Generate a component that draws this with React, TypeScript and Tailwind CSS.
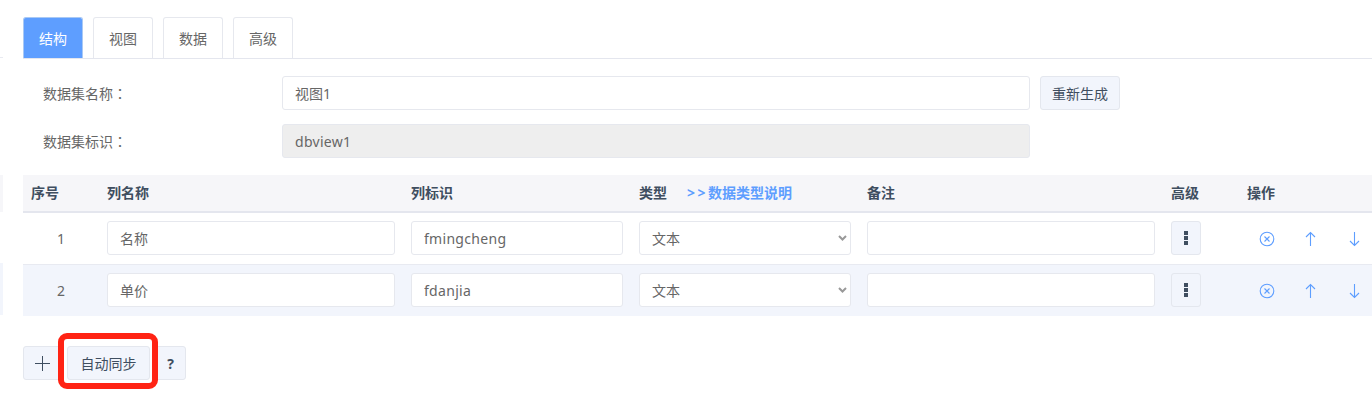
import React from "react";

const F = "font-['Noto_Sans','Noto_Sans_CJK_SC',sans-serif]";
const inputBase = "h-[34px] rounded-[3px] border border-[#e6e8ee] px-3 text-[14px] text-[#666] outline-none";
const inputCls = inputBase + " w-full bg-white";

function Tab({ label, active }: { label: string; active?: boolean }) {
  return (
    <div
      className={
        "flex h-[41px] w-[60px] items-center justify-center rounded-t-[3px] border border-b-0 text-[14px] " +
        (active
          ? "border-[#a9c9f5] bg-[#5e9eff] text-white"
          : "border-[#e6e8ee] bg-white text-[#666]")
      }
    >
      {label}
    </div>
  );
}

function Btn({ children, className }: { children: React.ReactNode; className?: string }) {
  return (
    <button
      className={
        "flex h-[34px] items-center justify-center rounded-[3px] border border-[#e4e7ee] bg-[#f2f5fc] text-[14px] text-[#3f4e60] " +
        (className ?? "")
      }
    >
      {children}
    </button>
  );
}

function OpIcons() {
  return (
    <div className="flex h-[34px] items-center pt-px text-[#5e9eff]">
      <svg width="16" height="16" viewBox="0 0 16 16" fill="none" stroke="currentColor" strokeWidth="1.1" className="ml-[20px]">
        <circle cx="8" cy="8" r="6.8" />
        <path d="M5.5 5.5l5 5M10.5 5.5l-5 5" />
      </svg>
      <svg width="13" height="16" viewBox="0 0 13 16" fill="none" stroke="currentColor" strokeWidth="1.1" className="ml-[29px]">
        <path d="M6.5 15V1.5M2 6L6.5 1.5 11 6" />
      </svg>
      <svg width="13" height="16" viewBox="0 0 13 16" fill="none" stroke="currentColor" strokeWidth="1.1" className="ml-[31px]">
        <path d="M6.5 1v13.5M2 10l4.5 4.5L11 10" />
      </svg>
    </div>
  );
}

const gridCols = "grid grid-cols-[76px_304px_228px_228px_304px_76px_133px]";

function Row({ n, name, id, alt }: { n: number; name: string; id: string; alt?: boolean }) {
  return (
    <div className={gridCols + " items-start pt-2 " + (alt ? "h-[51px] bg-[#f2f5fc]" : "h-[52px] border-b border-[#e8eaf1] bg-white")}>
      <div className="pt-px text-center text-[14px] leading-[34px] text-[#666]">{n}</div>
      <div className="px-2">
        <input readOnly value={name} className={inputCls} />
      </div>
      <div className="px-2">
        <input readOnly value={id} className={inputCls + " tracking-[0.3px]"} />
      </div>
      <div className="px-2">
        <div className={inputCls + " flex items-center justify-between"}>
          <span>文本</span>
          <svg width="9" height="6" viewBox="0 0 9 6" className="mr-[-9px]" fill="none" stroke="#999" strokeWidth="2">
            <path d="M1 1l3.5 3.5L8 1" />
          </svg>
        </div>
      </div>
      <div className="px-2">
        <input readOnly className={inputCls} />
      </div>
      <div className="px-2">
        <button className="flex h-[34px] w-[30px] flex-col items-center justify-center gap-[1px] rounded-[3px] border border-[#e4e7ee] bg-[#f2f5fc]">
          <span className="h-[4px] w-[4px] bg-[#3f4e60]" />
          <span className="h-[4px] w-[4px] bg-[#3f4e60]" />
          <span className="h-[4px] w-[4px] bg-[#3f4e60]" />
        </button>
      </div>
      <OpIcons />
    </div>
  );
}

function Label({ text }: { text: string }) {
  return (
    <div className="ml-[20px] w-[239px] text-[14px] text-[#666]">
      {text}
      <span className="font-['Noto_Sans_CJK_TC',sans-serif]">：</span>
    </div>
  );
}

export default function App() {
  return (
    <div className={F + " flex h-[410px] w-[1372px] overflow-hidden bg-white"}>
      <div className="w-[3px] shrink-0">
        <div className="mt-[57px] h-px bg-[#e8eaf1]" />
        <div className="mt-[117px] h-[37px] bg-[#f6f6f9]" />
        <div className="mt-[51px] h-[52px] bg-[#f2f5fc]" />
      </div>
      <div className="ml-[20px] flex-1">
        <div className="flex gap-[10px] border-b border-[#e4e6ee] pt-[17px]">
          <Tab label="结构" active />
          <Tab label="视图" />
          <Tab label="数据" />
          <Tab label="高级" />
        </div>

        <div className="mt-[17px] flex items-center">
          <Label text="数据集名称" />
          <input readOnly value="视图1" className={inputBase + " w-[748px] bg-white"} />
          <Btn className="ml-[10px] w-[80px]">重新生成</Btn>
        </div>
        <div className="mt-[14px] flex items-center">
          <Label text="数据集标识" />
          <input readOnly value="dbview1" className={inputBase + " w-[748px] bg-[#eeeeee] tracking-[0.3px]"} />
        </div>

        <div className="mt-[17px]">
          <div className={gridCols + " h-[38px] items-center border-b-[2px] border-[#e4e6ee] bg-[#f6f6f9] pb-[2px] text-[14px] font-bold text-[#3f4e60]"}>
            <div className="pl-[8px]">序号</div>
            <div className="px-2">列名称</div>
            <div className="px-2">列标识</div>
            <div className="flex px-2">
              <span>类型</span>
              <span className="ml-[20px] text-[#5e9eff]">
                <span className="tracking-[2.5px]">&gt;&gt;</span>数据类型说明
              </span>
            </div>
            <div className="px-2">备注</div>
            <div className="px-2">高级</div>
            <div className="pl-2">操作</div>
          </div>
          <Row n={1} name="名称" id="fmingcheng" />
          <Row n={2} name="单价" id="fdanjia" alt />
        </div>

        <div className="mt-[30px] flex items-center gap-[5px]">
          <Btn className="w-[39px]">
            <svg width="15" height="15" viewBox="0 0 15 15" fill="none" stroke="#3f4e60" strokeWidth="1">
              <path d="M7.5 0v15M0 7.5h15" />
            </svg>
          </Btn>
          <div className="relative">
            <Btn className="w-[83px]">自动同步</Btn>
            <div className="absolute -bottom-[9px] -left-[9px] -right-[8px] -top-[13px] rounded-[9px] border-[6px] border-[#ff2314]" />
          </div>
          <Btn className="w-[31px] font-bold">?</Btn>
        </div>
      </div>
    </div>
  );
}
